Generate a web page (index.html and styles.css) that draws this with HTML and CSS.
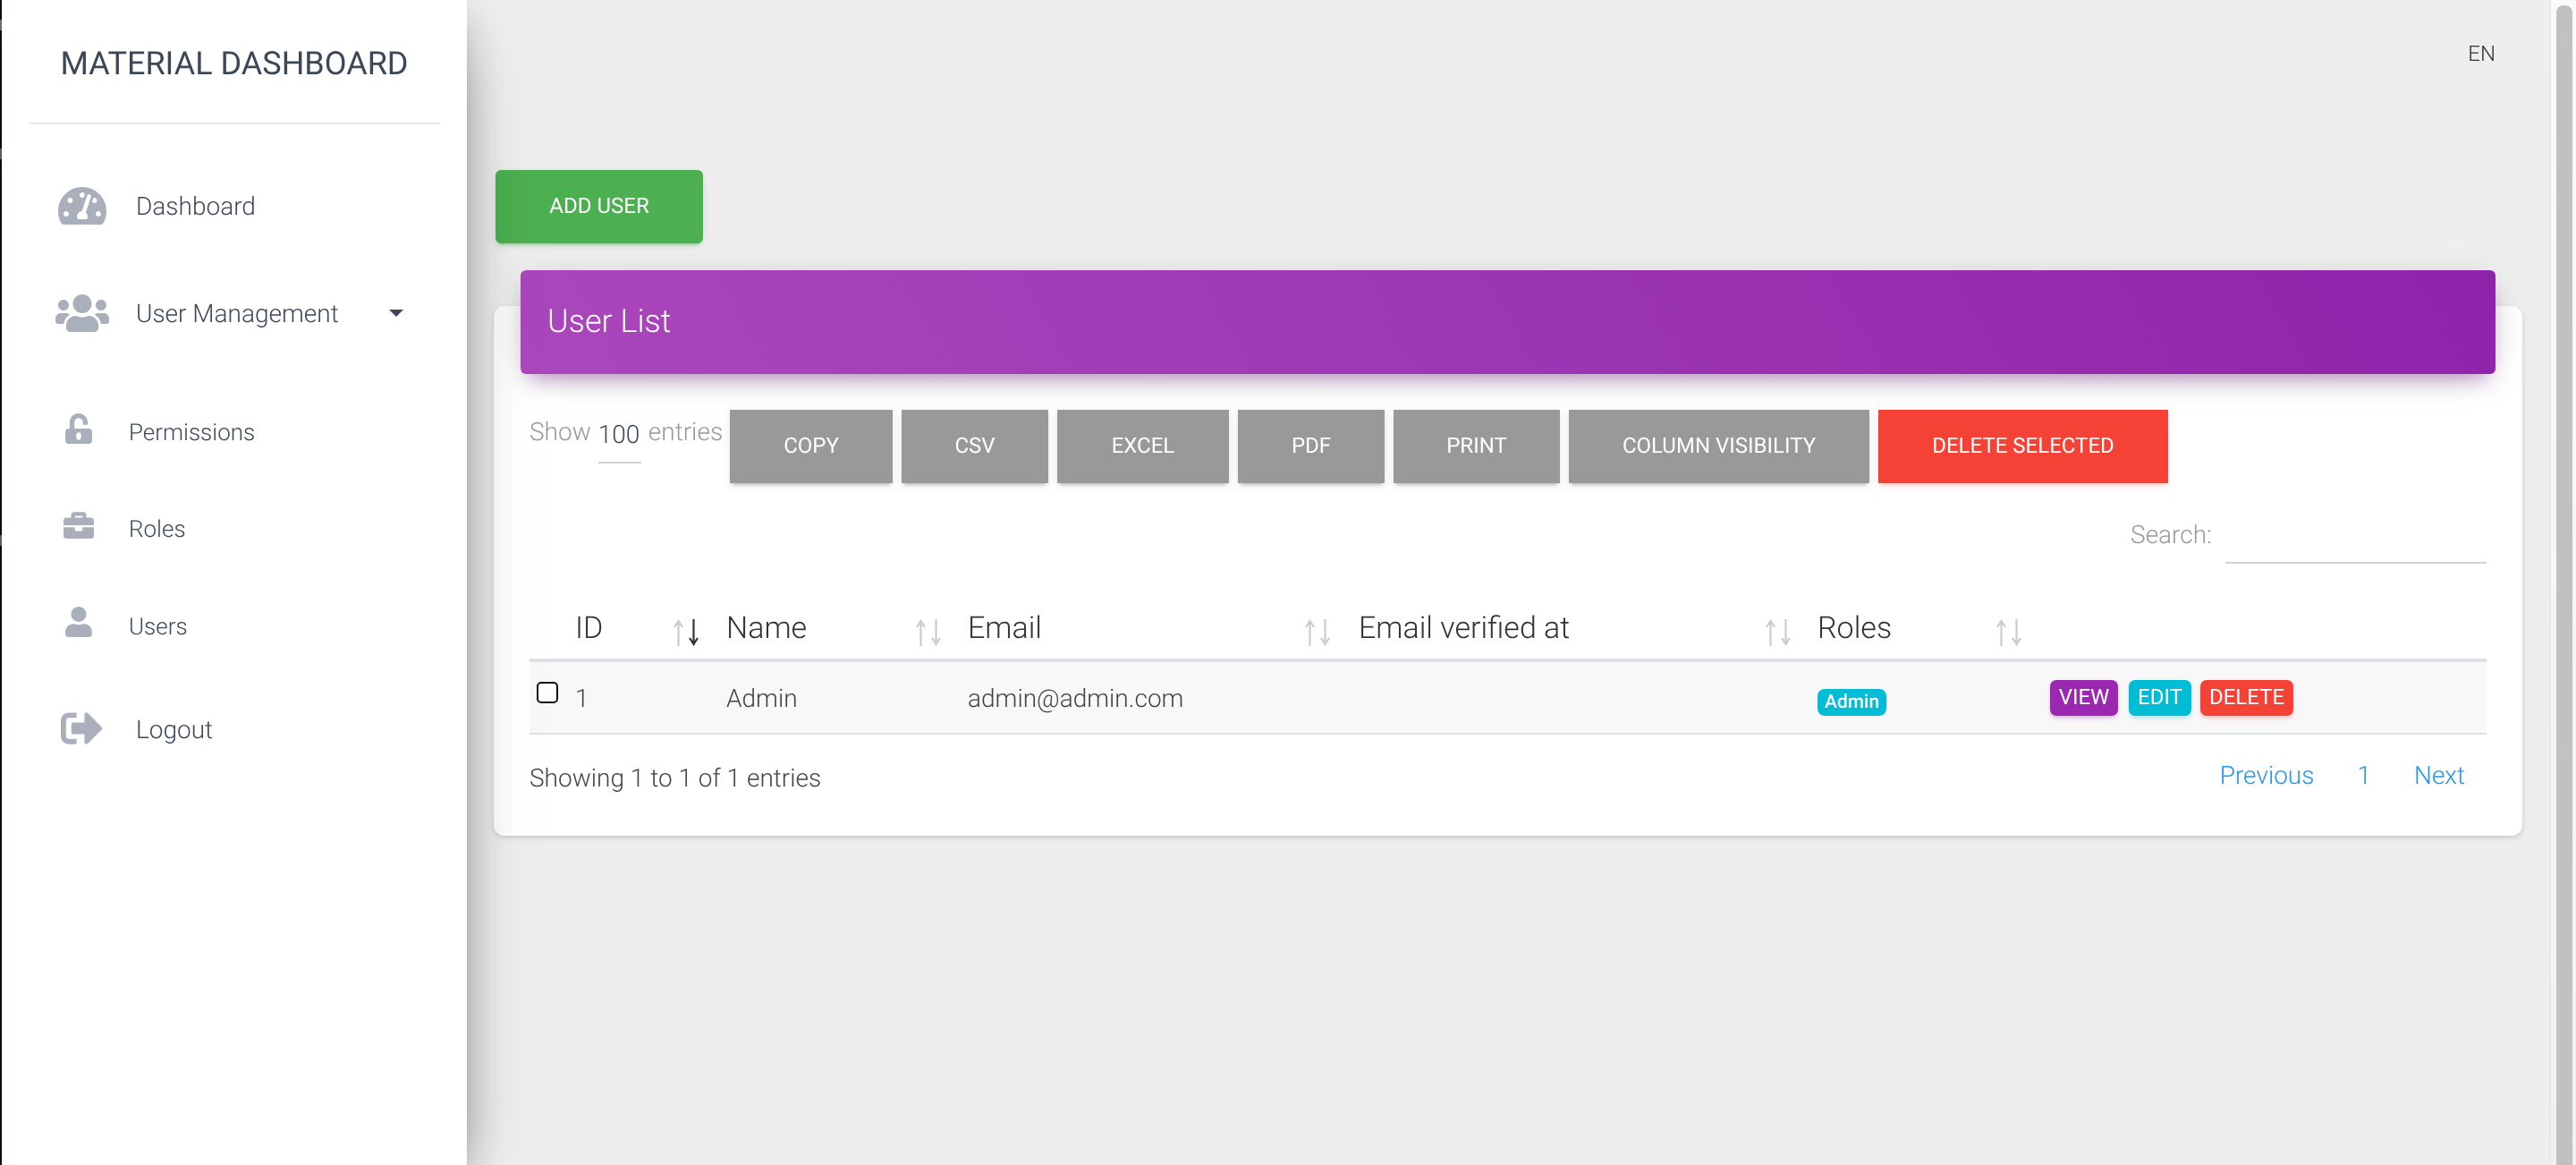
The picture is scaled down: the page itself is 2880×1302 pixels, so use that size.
FILE: index.html
```html
<!DOCTYPE html>
<html lang="en">
<head>
  <meta charset="UTF-8" />
  <title>User List - Material Dashboard</title>
  <link rel="stylesheet" href="styles.css">
</head>
<body>

  <div class="edge"></div>

  <!-- Sidebar -->
  <aside class="sidebar">
    <div class="brand">MATERIAL DASHBOARD</div>
    <nav class="nav">
      <a class="nav-item nav-dashboard">
        <svg class="nav-icon icon-dash" viewBox="0 32 576 448"><path d="M288 32C128.94 32 0 160.94 0 320c0 52.8 14.25 102.26 39.06 144.8 5.61 9.62 16.3 15.2 27.44 15.2h443c11.14 0 21.83-5.58 27.44-15.2C561.75 422.26 576 372.8 576 320c0-159.06-128.94-288-288-288zm0 64c14.71 0 26.58 10.13 30.32 23.65-1.11 2.26-2.64 4.23-3.45 6.67l-9.22 27.67c-5.13 3.49-10.97 6.01-17.64 6.01-17.67 0-32-14.33-32-32S270.33 96 288 96zM96 384c-17.67 0-32-14.33-32-32s14.33-32 32-32 32 14.33 32 32-14.33 32-32 32zm48-160c-17.67 0-32-14.33-32-32s14.33-32 32-32 32 14.33 32 32-14.33 32-32 32zm246.77-72.41l-61.33 184C343.13 347.33 352 364.54 352 384c0 11.72-3.38 22.55-8.88 32H232.88c-5.5-9.45-8.88-20.28-8.88-32 0-33.94 26.5-61.43 59.9-63.59l61.34-184.01c4.17-12.56 17.73-19.45 30.36-15.17 12.57 4.19 19.35 17.79 15.17 30.36zm14.66 57.2l15.52-46.55c3.47-1.29 7.13-2.23 11.05-2.23 17.67 0 32 14.33 32 32s-14.33 32-32 32c-11.38-.01-20.89-6.28-26.57-15.22zM480 384c-17.67 0-32-14.33-32-32s14.33-32 32-32 32 14.33 32 32-14.33 32-32 32z"/></svg>
        <span>Dashboard</span>
      </a>
      <a class="nav-item nav-users">
        <svg class="nav-icon icon-users" viewBox="0 32 640 448"><path d="M96 224c35.3 0 64-28.7 64-64s-28.7-64-64-64-64 28.7-64 64 28.7 64 64 64zm448 0c35.3 0 64-28.7 64-64s-28.7-64-64-64-64 28.7-64 64 28.7 64 64 64zm32 32h-64c-17.6 0-33.5 7.1-45.1 18.6 40.3 22.1 68.9 62 75.1 109.4h66c17.7 0 32-14.3 32-32v-32c0-35.3-28.7-64-64-64zm-256 0c61.9 0 112-50.1 112-112S381.9 32 320 32 208 82.1 208 144s50.1 112 112 112zm76.8 32h-8.3c-20.8 10-43.9 16-68.5 16s-47.6-6-68.5-16h-8.3C179.6 288 128 339.6 128 403.2V432c0 26.5 21.5 48 48 48h288c26.5 0 48-21.5 48-48v-28.8c0-63.6-51.6-115.2-115.2-115.2zm-223.7-13.4C161.5 263.1 145.6 256 128 256H64c-35.3 0-64 28.7-64 64v32c0 17.7 14.3 32 32 32h65.9c6.3-47.4 34.9-87.3 75.2-109.4z"/></svg>
        <span>User Management</span>
        <i class="caret"></i>
      </a>
      <a class="nav-item nav-sub">
        <svg class="nav-icon icon-sub" viewBox="0 0 448 512"><path d="M400 256H152V152.9c0-39.6 31.7-72.5 71.3-72.9 40-.4 72.7 32.1 72.7 72v16c0 13.3 10.7 24 24 24h32c13.3 0 24-10.7 24-24v-16C376 68 307.5-.3 223.5 0 139.5.3 72 69.5 72 153.5V256H48c-26.5 0-48 21.5-48 48v160c0 26.5 21.5 48 48 48h352c26.5 0 48-21.5 48-48V304c0-26.5-21.5-48-48-48zM264 408c0 22.1-17.9 40-40 40s-40-17.9-40-40v-48c0-22.1 17.9-40 40-40s40 17.900 40 40v48z"/></svg>
        <span>Permissions</span>
      </a>
      <a class="nav-item nav-sub">
        <svg class="nav-icon icon-case" viewBox="0 32 512 448"><path d="M320 336c0 8.84-7.16 16-16 16h-96c-8.84 0-16-7.16-16-16v-48H0v144c0 25.6 22.4 48 48 48h416c25.6 0 48-22.4 48-48V288H320v48zm144-208h-80V80c0-25.6-22.4-48-48-48H176c-25.6 0-48 22.4-48 48v48H48c-25.6 0-48 22.4-48 48v80h512v-80c0-25.6-22.4-48-48-48zm-144 0H192V96h128v32z"/></svg>
        <span>Roles</span>
      </a>
      <a class="nav-item nav-sub">
        <svg class="nav-icon icon-sub icon-user" viewBox="0 0 448 512"><path d="M224 256c70.7 0 128-57.3 128-128S294.7 0 224 0 96 57.3 96 128s57.3 128 128 128zm89.6 32h-16.7c-22.2 10.2-46.9 16-72.9 16s-50.6-5.8-72.9-16h-16.7C60.2 288 0 348.2 0 422.4V464c0 26.5 21.5 48 48 48h352c26.5 0 48-21.5 48-48v-41.6c0-74.2-60.2-134.4-134.4-134.4z"/></svg>
        <span>Users</span>
      </a>
      <a class="nav-item nav-logout">
        <svg class="nav-icon icon-logout" viewBox="0 64 512 384"><path d="M497 273L329 441c-15 15-41 4.5-41-17v-96H152c-13.3 0-24-10.7-24-24v-96c0-13.3 10.7-24 24-24h136V88c0-21.4 25.9-32 41-17l168 168c9.3 9.4 9.3 24.6 0 34zM192 436v-40c0-6.6-5.4-12-12-12H96c-17.7 0-32-14.3-32-32V160c0-17.7 14.3-32 32-32h84c6.6 0 12-5.4 12-12V76c0-6.6-5.4-12-12-12H96c-53 0-96 43-96 96v192c0 53 43 96 96 96h84c6.6 0 12-5.4 12-12z"/></svg>
        <span>Logout</span>
      </a>
    </nav>
  </aside>

  <!-- Contenido -->
  <main class="content">
    <div class="topbar"><span class="lang">EN</span></div>

    <div class="add-row"><a class="btn btn-add">ADD USER</a></div>

    <section class="card">
      <header class="card-header">User List</header>

      <div class="card-body">
        <div class="toolbar">
          <div class="length">
            <span>Show</span>
            <span class="length-select">100</span>
            <span>entries</span>
          </div>
          <div class="dt-buttons">
            <a class="btn btn-gray">COPY</a>
            <a class="btn btn-gray">CSV</a>
            <a class="btn btn-gray">EXCEL</a>
            <a class="btn btn-gray">PDF</a>
            <a class="btn btn-gray">PRINT</a>
            <a class="btn btn-gray">COLUMN VISIBILITY</a>
            <a class="btn btn-red">DELETE SELECTED</a>
          </div>
        </div>

        <div class="search-row">
          <label>Search:</label>
          <span class="search-input"></span>
        </div>

        <table class="table">
          <thead>
            <tr>
              <th class="col-id">ID
                <svg class="sort" viewBox="0 0 34 30"><path class="off" d="M8.500 30V3M4 9l4.500-7L13 9"/><path class="on" d="M25.500 0v27M21 21l4.500 7 4.500-7"/></svg>
              </th>
              <th class="col-name">Name
                <svg class="sort" viewBox="0 0 34 30"><path class="off" d="M8.500 30V3M4 9l4.500-7L13 9"/><path class="off" d="M25.500 0v27M21 21l4.500 7 4.500-7"/></svg>
              </th>
              <th class="col-email">Email
                <svg class="sort" viewBox="0 0 34 30"><path class="off" d="M8.500 30V3M4 9l4.500-7L13 9"/><path class="off" d="M25.500 0v27M21 21l4.500 7 4.500-7"/></svg>
              </th>
              <th class="col-verified">Email verified at
                <svg class="sort" viewBox="0 0 34 30"><path class="off" d="M8.500 30V3M4 9l4.500-7L13 9"/><path class="off" d="M25.500 0v27M21 21l4.500 7 4.500-7"/></svg>
              </th>
              <th class="col-roles">Roles
                <svg class="sort" viewBox="0 0 34 30"><path class="off" d="M8.500 30V3M4 9l4.500-7L13 9"/><path class="off" d="M25.500 0v27M21 21l4.500 7 4.500-7"/></svg>
              </th>
              <th class="col-actions"></th>
            </tr>
          </thead>
          <tbody>
            <tr>
              <td class="col-id"><i class="check"></i>1</td>
              <td>Admin</td>
              <td>admin@admin.com</td>
              <td></td>
              <td><span class="badge">Admin</span></td>
              <td>
                <div class="actions">
                  <a class="btn-xs xs-view">VIEW</a>
                  <a class="btn-xs xs-edit">EDIT</a>
                  <a class="btn-xs xs-delete">DELETE</a>
                </div>
              </td>
            </tr>
          </tbody>
        </table>

        <div class="table-foot">
          <div class="info">Showing 1 to 1 of 1 entries</div>
          <div class="paginate">
            <a>Previous</a>
            <a>1</a>
            <a>Next</a>
          </div>
        </div>
      </div>
    </section>
  </main>

  <!-- Barra de scroll -->
  <div class="scrollbar"><div class="scroll-thumb"></div></div>

</body>
</html>
```

FILE: styles.css
```css
/* ================================
   Base
================================= */
* {
  margin: 0;
  padding: 0;
  box-sizing: border-box;
}

html, body {
  height: 1302px;
  overflow: hidden;
}

body {
  display: flex;
  font-family: Roboto, "Liberation Sans", sans-serif;
  font-weight: 300;
  font-size: 28px;
  color: #3c4858;
  background: #eee;
  text-rendering: geometricPrecision;
}

/* tira oscura del borde izquierdo */
.edge {
  flex: 0 0 2px;
  background:
    linear-gradient(#777, #777) 0 22px / 2px 12px no-repeat,
    linear-gradient(#777, #777) 0 166px / 2px 12px no-repeat,
    linear-gradient(#777, #777) 0 598px / 2px 12px no-repeat,
    #17091c;
}

/* ================================
   Sidebar
================================= */
.sidebar {
  flex: 0 0 520px;
  background: #fff;
  position: relative;
  z-index: 2;
  box-shadow: 0 32px 76px -24px rgba(0,0,0,.56), 0 8px 50px 0 rgba(0,0,0,.12), 0 16px 20px -10px rgba(0,0,0,.2);
}

.brand {
  margin: 0 30px;
  height: 139px;
  padding-top: 45px;
  border-bottom: 2px solid #e8e8e8;
  text-align: center;
  font-size: 36px;
  line-height: 52px;
  font-weight: 400;
}

.nav {
  display: flex;
  flex-direction: column;
}

/* texto en gris sin subpixel, como la captura */
.brand, .nav, .content {
  will-change: transform;
}

.nav-item {
  display: flex;
  align-items: center;
  height: 60px;
}

.nav-dashboard { margin-top: 61px; }
.nav-users { margin-top: 60px; }
.nav-logout { margin-top: 54px; }
.nav-sub { margin-top: 49px; font-size: 26px; }
.nav-users + .nav-sub { margin-top: 74px; }
.nav-users + .nav-sub + .nav-sub { margin-top: 48px; }

.nav-icon {
  fill: #a9afbb;
  flex: none;
}

.icon-dash { width: 54px; height: 42px; margin: 0 33px 0 63px; }
.icon-users { width: 60px; height: 42px; margin: 0 30px 0 60px; }
.icon-sub { width: 30px; height: 34px; margin: 0 41px 10px 71px; }
.icon-user { margin-bottom: 12px; }
.icon-case { width: 34px; height: 30px; margin: 0 39px 10px 69px; }
.icon-logout { width: 47px; height: 36px; margin: 0 37px 2px 66px; }

.caret {
  margin-left: 56px;
  border-top: 8px solid #3c4858;
  border-left: 8px solid transparent;
  border-right: 8px solid transparent;
}

/* ================================
   Contenido
================================= */
.content {
  flex: 0 0 2326px;
  padding: 0 30px;
}

.topbar {
  height: 190px;
  display: flex;
  justify-content: flex-end;
  padding: 43px 30px 0 0;
}

.lang {
  font-size: 24px;
  line-height: 34px;
  color: #333;
}

.add-row { display: flex; }

.btn {
  display: flex;
  align-items: center;
  justify-content: center;
  height: 82px;
  padding-bottom: 2px;
  font-size: 24px;
  font-weight: 400;
  color: #fff;
  box-shadow: 0 4px 4px -2px rgba(153,153,153,.35), 0 6px 2px -4px rgba(153,153,153,.3), 0 2px 10px 0 rgba(153,153,153,.2);
}

.btn-add {
  width: 232px;
  margin-left: 2px;
  background: #4caf50;
  border-radius: 6px;
  box-shadow: 0 4px 4px -2px rgba(76,175,80,.28), 0 6px 2px -4px rgba(76,175,80,.2), 0 2px 10px 0 rgba(76,175,80,.12);
}

.btn-gray { background: #999; }
.btn-red {
  background: #f44336;
  box-shadow: 0 4px 4px -2px rgba(244,67,54,.28), 0 2px 10px 0 rgba(244,67,54,.12);
}

/* ================================
   Card
================================= */
.card {
  display: flow-root;
  width: 2268px;
  height: 592px;
  margin-top: 70px;
  background: #fff;
  border-radius: 12px;
  box-shadow: 0 2px 4px 0 rgba(0,0,0,.1), 0 2px 10px 0 rgba(0,0,0,.08);
}

.card-header {
  width: 2208px;
  height: 116px;
  margin: -40px 0 0 30px;
  padding: 0 0 2px 30px;
  display: flex;
  align-items: center;
  position: relative;
  font-size: 36px;
  color: #fff;
  background: linear-gradient(60deg, #ab47bc, #8e24aa);
  border-radius: 6px;
  box-shadow: 0 8px 40px -10px rgba(0,0,0,.28), 0 14px 20px -10px rgba(156,39,176,.4);
}

.card-body {
  padding: 40px 40px 0;
}

.toolbar {
  display: flex;
}

.length {
  display: flex;
  gap: 8px;
  width: 224px;
  height: 60px;
  color: #999;
  line-height: 42px;
  padding-top: 4px;
}

.length-select {
  width: 48px;
  height: 56px;
  color: #3c4858;
  line-height: 48px;
  border-bottom: 2px solid #d2d2d2;
}

.dt-buttons {
  display: grid;
  grid-template-columns: 182px 164px 192px 164px 186px 336px 324px;
  gap: 10px;
}

/* ================================
   Search
================================= */
.search-row {
  display: flex;
  justify-content: flex-end;
  align-items: flex-end;
  height: 90px;
  color: #999;
}

.search-row label {
  line-height: 60px;
  margin: 0 15px 2px 0;
}

.search-input {
  width: 292px;
  height: 60px;
  border-bottom: 2px solid #d2d2d2;
}

/* ================================
   Tabla
================================= */
.table {
  width: 2188px;
  margin-top: 10px;
  border-collapse: collapse;
  table-layout: fixed;
}

.table th {
  position: relative;
  height: 98px;
  padding: 0 0 14px;
  vertical-align: bottom;
  text-align: left;
  font-size: 34px;
  line-height: 40px;
  font-weight: 300;
  color: #333;
  border-bottom: 4px solid #dee2e6;
}

.col-id { width: 220px; }
.col-name { width: 270px; }
.col-email { width: 437px; }
.col-verified { width: 513px; }
.col-roles { width: 260px; }

.table th.col-id, .table td.col-id { padding-left: 51px; }

.sort {
  position: absolute;
  top: 52px;
  right: 29px;
  width: 34px;
  height: 30px;
  fill: none;
  stroke-width: 2.2;
}

th.col-id .sort { right: 28px; }
th.col-name .sort { right: 27px; }
th.col-verified .sort { right: 27px; }

.sort .off { stroke: #ccc; }
.sort .on { stroke: #333; }

.table td {
  height: 82px;
  padding-top: 2px;
  background: #f8f8f8;
  border-bottom: 2px solid #dee2e6;
  color: #444;
}

.table td.col-id { position: relative; }

.check {
  position: absolute;
  left: 8px;
  top: 22px;
  width: 24px;
  height: 24px;
  border: 2px solid #111;
  border-radius: 5px;
  background: #fff;
}

.badge {
  display: inline-block;
  padding: 0 8px;
  height: 30px;
  line-height: 30px;
  font-size: 21px;
  font-weight: 500;
  color: #fff;
  background: #00bcd4;
  border-radius: 8px;
  vertical-align: -3px;
}

.actions {
  display: flex;
  gap: 10px;
  margin-bottom: 2px;
}

.btn-xs {
  display: block;
  height: 40px;
  line-height: 38px;
  text-align: center;
  font-size: 24px;
  font-weight: 400;
  color: #fff;
  border-radius: 7px;
}

.xs-view { width: 76px; margin-right: 2px; background: #9c27b0; box-shadow: 0 3px 5px -1px rgba(156,39,176,.35); }
.xs-edit { width: 70px; background: #00bcd4; box-shadow: 0 3px 5px -1px rgba(0,188,212,.35); }
.xs-delete { width: 104px; background: #f44336; box-shadow: 0 3px 5px -1px rgba(244,67,54,.35); }

.table-foot {
  display: flex;
  justify-content: space-between;
  padding-top: 26px;
  color: #444;
}

.info { line-height: 46px; }

.paginate {
  display: flex;
  gap: 48px;
  padding-right: 24px;
  line-height: 39px;
  color: #2196f3;
}

/* ================================
   Scrollbar
================================= */
.scrollbar {
  flex: 0 0 32px;
  height: 1302px;
  padding: 6px 4px 0 6px;
  background: linear-gradient(#fafafa, #f1f1f1);
  border-left: 2px solid #e8e8e8;
  border-right: 2px solid #fff;
}

.scroll-thumb {
  height: 100%;
  background: #c1c1c1;
  border-radius: 8px 8px 0 0;
}
```
